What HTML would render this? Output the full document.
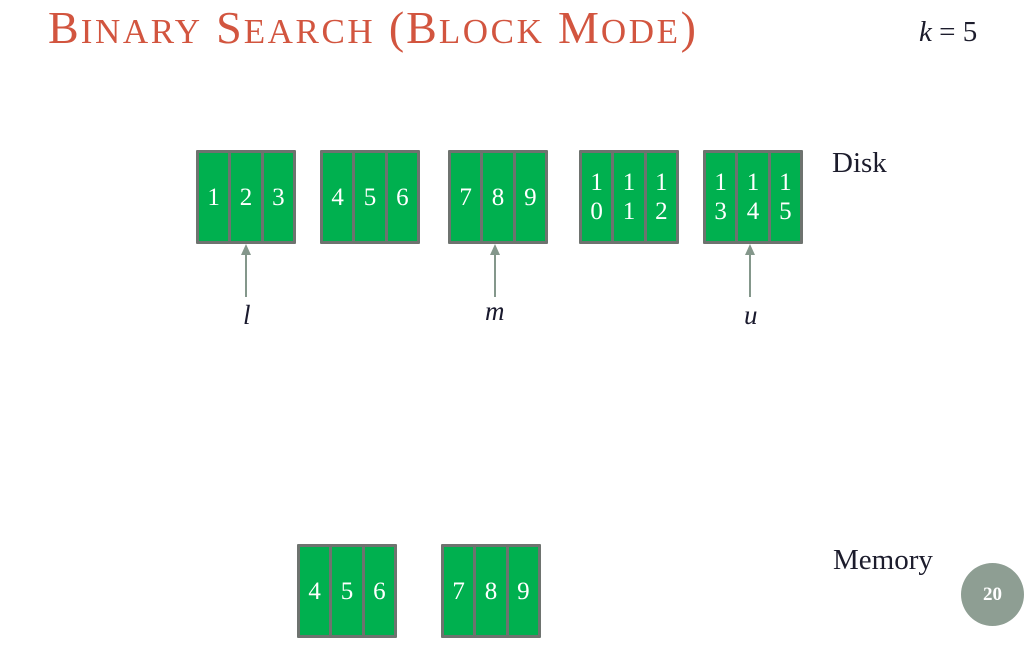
<!DOCTYPE html>
<html><head><meta charset="utf-8"><style>
body{margin:0;width:1032px;height:669px;background:#fff;position:relative;overflow:hidden;font-family:"Liberation Serif",serif}
.t{position:absolute;left:48px;top:1px;font-size:46px;color:#d2553f;white-space:nowrap;letter-spacing:2px}
.t s{text-decoration:none;font-size:35px;letter-spacing:2.6px}
.b{position:absolute;width:94px;height:88px;border:3px solid #6e736f;background:#00b04f;display:flex;border-radius:1px}
.c{flex:1;border-left:3px solid #6e736f;color:#fff;font-size:25px;display:flex;align-items:center;justify-content:center;text-align:center;line-height:29px}
.c:first-child{border-left:none}
.a{position:absolute;width:2px;background:#84978b;top:254px;height:43px}
.h{position:absolute;top:244px;width:0;height:0;border-left:5px solid transparent;border-right:5px solid transparent;border-bottom:11px solid #84978b}
.l{position:absolute;font-style:italic;font-size:27px;color:#1a1a2e}
.lbl{position:absolute;font-size:29px;color:#1c1c2c}
</style></head><body>
<div class="t">B<s>INARY</s> S<s>EARCH</s> (B<s>LOCK</s> M<s>ODE</s>)</div>
<div class="lbl" style="left:919px;top:16px"><i>k</i> = 5</div>
<div class="b" style="left:196px;top:150px"><div class="c">1</div><div class="c">2</div><div class="c">3</div></div>
<div class="b" style="left:320px;top:150px"><div class="c">4</div><div class="c">5</div><div class="c">6</div></div>
<div class="b" style="left:448px;top:150px"><div class="c">7</div><div class="c">8</div><div class="c">9</div></div>
<div class="b" style="left:579px;top:150px"><div class="c">1<br>0</div><div class="c">1<br>1</div><div class="c">1<br>2</div></div>
<div class="b" style="left:703px;top:150px"><div class="c">1<br>3</div><div class="c">1<br>4</div><div class="c">1<br>5</div></div>
<div class="lbl" style="left:832px;top:147px">Disk</div>
<div class="a" style="left:245px"></div><div class="h" style="left:241px"></div>
<div class="a" style="left:494px"></div><div class="h" style="left:490px"></div>
<div class="a" style="left:749px"></div><div class="h" style="left:745px"></div>
<div class="l" style="left:243px;top:300px">l</div>
<div class="l" style="left:485px;top:296px">m</div>
<div class="l" style="left:744px;top:300px">u</div>
<div class="b" style="left:297px;top:544px"><div class="c">4</div><div class="c">5</div><div class="c">6</div></div>
<div class="b" style="left:441px;top:544px"><div class="c">7</div><div class="c">8</div><div class="c">9</div></div>
<div class="lbl" style="left:833px;top:544px">Memory</div>
<div style="position:absolute;left:961px;top:563px;width:63px;height:63px;border-radius:50%;background:#8e9e93;color:#fff;font-weight:bold;font-size:19px;display:flex;align-items:center;justify-content:center">20</div>
</body></html>
